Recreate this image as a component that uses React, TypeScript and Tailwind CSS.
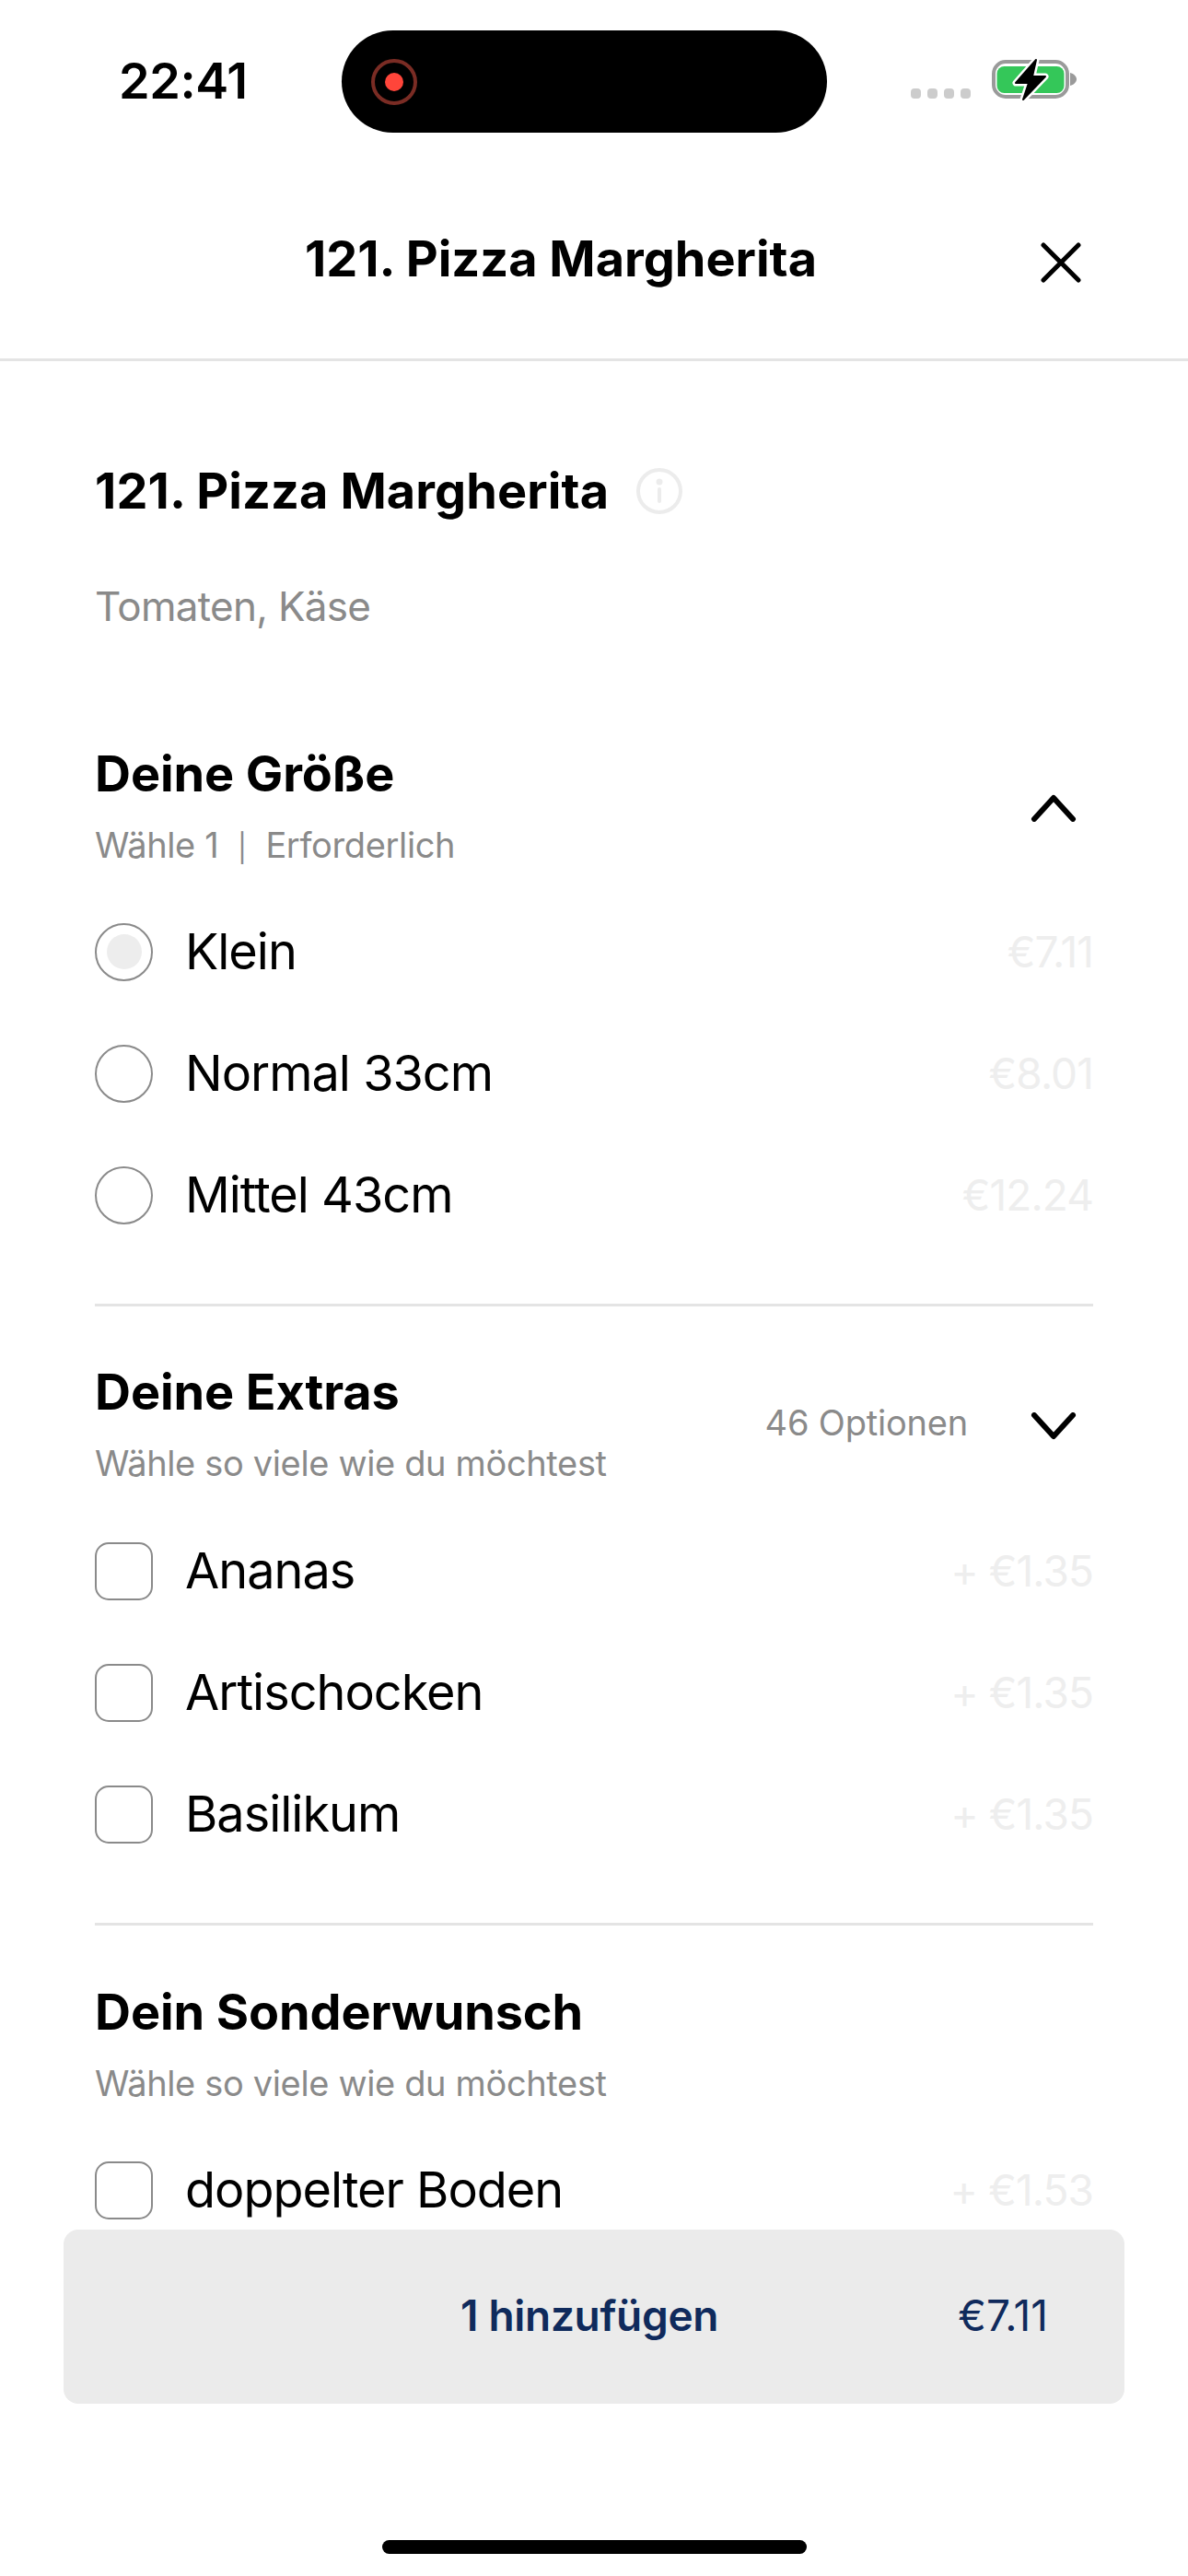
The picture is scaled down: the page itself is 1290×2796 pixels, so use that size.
import React from "react";

function Chevron({ up }: { up?: boolean }) {
  return (
    <svg className="mt-[6px]" width="50" height="30" viewBox="0 0 50 30" fill="none" stroke="#000" strokeWidth="6" strokeLinecap="round" strokeLinejoin="round">
      <path d={up ? "M4 27 L25 4 L46 27" : "M4 3 L25 26 L46 3"} />
    </svg>
  );
}

function Row({ label, price, round, selected }: { label: string; price: string; round?: boolean; selected?: boolean }) {
  return (
    <div className="flex h-[132px] items-center justify-between">
      <div className="flex items-center gap-[35px]">
        <div className={`flex h-[63px] w-[63px] items-center justify-center border-[2.5px] border-[#8a8a8a] bg-white ${round ? "rounded-full" : "rounded-[15px]"}`}>
          {selected && <div className="h-[38px] w-[38px] rounded-full bg-[#ededed]" />}
        </div>
        <span className="text-[54px] leading-[64px] tracking-[-1px] text-black">{label}</span>
      </div>
      <span className="text-[46px] leading-[56px] tracking-[-0.9px] text-[#eeeeee]">{price}</span>
    </div>
  );
}

function SectionHead({ title, sub, right }: { title: string; sub: React.ReactNode; right?: React.ReactNode }) {
  return (
    <div className="flex items-center justify-between">
      <div className="flex flex-col">
        <h2 className="text-[54px] leading-[64px] font-bold tracking-[-0.1px] text-black">{title}</h2>
        <p className="mt-[22px] text-[38px] leading-[46px] tracking-[-0.35px] text-[#8a8a8a]">{sub}</p>
      </div>
      {right}
    </div>
  );
}

export default function App() {
  return (
    <div className="relative h-[2796px] w-[1290px] overflow-hidden bg-white font-[Inter,sans-serif]">
      {/* status bar */}
      <div className="flex h-[192px] items-start">
        <span className="mt-[56px] ml-[129px] w-[242px] text-[54px] leading-[64px] font-semibold tracking-[-0.4px] text-black">22:41</span>
        <div className="mt-[33px] flex h-[111px] w-[527px] items-center rounded-[56px] bg-black pl-[32px]">
          <div className="flex h-[50px] w-[50px] items-center justify-center rounded-full border-[4px] border-[#7a2c24]">
            <div className="h-[20px] w-[20px] rounded-full bg-[#ff453a]" />
          </div>
        </div>
        <div className="ml-[91px] mt-[96px] flex gap-[7px]">
          <i className="h-[11px] w-[11px] rounded-[4px] bg-[#cccccc]" />
          <i className="h-[11px] w-[11px] rounded-[4px] bg-[#cccccc]" />
          <i className="h-[11px] w-[11px] rounded-[4px] bg-[#cccccc]" />
          <i className="h-[11px] w-[11px] rounded-[4px] bg-[#cccccc]" />
        </div>
        <svg className="mt-[62px] ml-[23px]" width="92" height="50" viewBox="0 0 92 50" fill="none">
          <rect x="2" y="5" width="80" height="38" rx="13" stroke="#9a9a9a" strokeWidth="4" />
          <rect x="5.5" y="10" width="73" height="29" rx="8" fill="#34c759" />
          <path d="M85 17 C89 18 92 21 92 24 C92 27 89 30 85 31 Z" fill="#9a9a9a" />
          <path d="M48 3 L26 28 H40 L34 46 L58 21 H44 Z" fill="#fff" stroke="#fff" strokeWidth="7" strokeLinejoin="round" />
          <path d="M48 3 L26 28 H40 L34 46 L58 21 H44 Z" fill="#000" stroke="#000" strokeWidth="2" strokeLinejoin="round" />
        </svg>
      </div>

      {/* header */}
      <div className="relative flex h-[200px] items-start justify-center border-b-[3px] border-[#e4e4e4] pr-[72px]">
        <h1 className="mt-[56px] text-[54px] leading-[66px] font-bold tracking-[0px] text-black">121. Pizza Margherita</h1>
        <svg className="absolute top-[71px] left-[1130px]" width="44" height="44" viewBox="0 0 44 44" fill="none" stroke="#000" strokeWidth="5" strokeLinecap="round">
          <path d="M3 3 L41 41 M41 3 L3 41" />
        </svg>
      </div>

      {/* body */}
      <div className="px-[103px]">
        <div className="mt-[108px] flex items-center gap-[30px]">
          <h2 className="text-[54px] leading-[66px] font-bold tracking-[0.1px] text-black">121. Pizza Margherita</h2>
          <svg width="50" height="50" viewBox="0 0 50 50" fill="none" stroke="#ececec" strokeWidth="4" strokeLinecap="round">
            <circle cx="25" cy="25" r="23" />
            <path d="M25 23 V36" />
            <circle cx="25" cy="15" r="1.5" fill="#ececec" />
          </svg>
        </div>
        <p className="mt-[65px] text-[44px] leading-[54px] tracking-[-0.7px] text-[#8a8a8a]">Tomaten, Käse</p>

        <div className="mt-[123px]">
          <SectionHead
            title="Deine Größe"
            sub={
              <>
                {"Wähle 1\u00a0\u00a0"}
                <span className="text-[30px] leading-none">|</span>
                {"\u00a0\u00a0Erforderlich"}
              </>
            }
            right={<div className="mr-[18px] flex"><Chevron up /></div>}
          />
        </div>
        <div className="mt-[27px]">
          <Row round selected label="Klein" price="€7.11" />
          <Row round label="Normal 33cm" price="€8.01" />
          <Row round label="Mittel 43cm" price="€12.24" />
        </div>
        <div className="mt-[52px] h-[3px] bg-[#e4e4e4]" />

        <div className="mt-[61px]">
          <SectionHead
            title="Deine Extras"
            sub="Wähle so viele wie du möchtest"
            right={
              <div className="flex items-center">
                <span className="mb-[3px] text-[38px] leading-[46px] tracking-[-0.2px] text-[#8a8a8a]">46 Optionen</span>
                <div className="mr-[18px] ml-[68px] flex"><Chevron /></div>
              </div>
            }
          />
        </div>
        <div className="mt-[28px]">
          <Row label="Ananas" price="+ €1.35" />
          <Row label="Artischocken" price="+ €1.35" />
          <Row label="Basilikum" price="+ €1.35" />
        </div>
        <div className="mt-[52px] h-[3px] bg-[#e4e4e4]" />

        <div className="mt-[62px]">
          <SectionHead title="Dein Sonderwunsch" sub="Wähle so viele wie du möchtest" />
        </div>
        <div className="mt-[27px]">
          <Row label="doppelter Boden" price="+ €1.53" />
        </div>
      </div>

      {/* floating footer */}
      <div className="absolute top-[2420px] left-[69px] flex h-[189px] w-[1152px] items-center rounded-[16px] bg-[#ebebeb] pb-[4px] text-[#0f2a5c]">
        <span className="ml-[431px] text-[46px] leading-[56px] font-semibold tracking-[-0.3px]">1 hinzufügen</span>
        <span className="ml-auto mr-[83px] text-[46px] leading-[56px]">€7.11</span>
      </div>

      {/* home indicator */}
      <div className="absolute top-[2757px] left-[415px] h-[15px] w-[461px] rounded-full bg-black" />
    </div>
  );
}
